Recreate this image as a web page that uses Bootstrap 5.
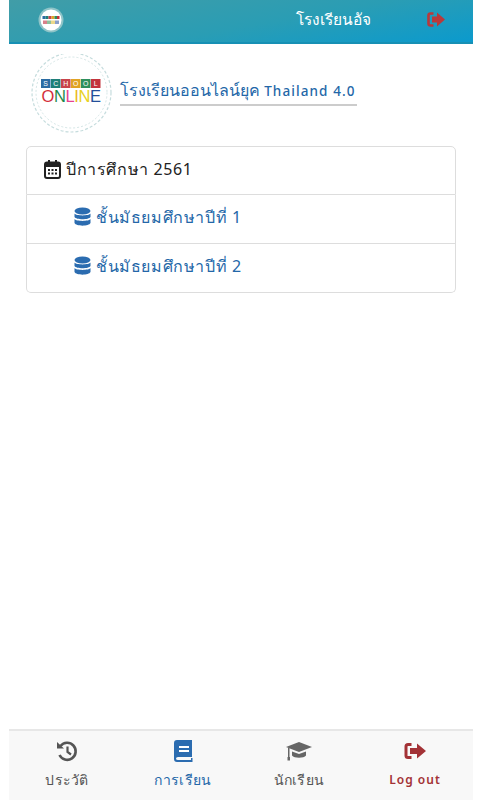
<!DOCTYPE html>
<html lang="th">
<head>
    <meta charset="UTF-8">
    <meta name="viewport" content="width=device-width, initial-scale=1.0">
    <title>School Online</title>
    <link rel="stylesheet" href="https://cdn.jsdelivr.net/npm/bootstrap@5.3.0/dist/css/bootstrap.min.css">
    <style>
        body {
            background: #fff;
            font-family: "Noto Sans", "Open Sans", "Liberation Sans", sans-serif;
        }
        .app-shell {
            width: 464px;
            height: 800px;
            margin-left: 9px;
        }
        .top-bar {
            height: 44px;
            background: linear-gradient(170deg, #419da7 0%, #2a9db4 55%, #0b9acd 100%);
            border-bottom: 2px solid #1790b4;
        }
        .top-logo {
            width: 26px;
            height: 26px;
            margin: 0 0 2px 29px;
        }
        .top-title {
            color: #fff;
            font-size: 15.5px;
            margin: 0 0 2px 232px;
            width: 100px;
            line-height: 1;
        }
        .top-exit {
            width: 18px;
            height: 15px;
            margin: 0 0 4px 31px;
        }
        .brand-row {
            padding: 10px 0 0 20px;
        }
        .brand-logo {
            width: 85px;
            height: 80px;
            flex: none;
        }
        .brand-title {
            margin: 0 0 4px 6px;
            width: 237px;
            height: 28px;
            color: #2467a8;
            font-size: 16px;
            line-height: 24px;
            white-space: nowrap;
            border-bottom: 2px solid #ccc;
        }
        .brand-latin {
            font-size: 13.5px;
            font-weight: 500;
            letter-spacing: 1.1px;
        }
        .year-list {
            margin: 12px 17px 0;
            border-color: #ddd;
            border-radius: 5px;
        }
        .year-list .list-group-item {
            height: 49px;
            padding: 0 0 3px;
            display: flex;
            align-items: center;
            border-color: #ddd;
            font-size: 16px;
            letter-spacing: .6px;
        }
        .year-list .year-head {
            padding-left: 17px;
            color: #222;
        }
        .year-list .grade-row {
            padding: 0 0 5px 47px;
            color: #2467a8;
        }
        .row-icon {
            width: 17px;
            height: 20px;
            margin-right: 5px;
            flex: none;
        }
        .bottom-nav {
            height: 71px;
            background: #f8f8f8;
            border-top: 2px solid #e7e7e7;
        }
        .nav-cell {
            width: 25%;
            padding-top: 9px;
            font-size: 14px;
            line-height: 20px;
            color: #555;
            letter-spacing: .3px;
        }
        .nav-cell svg {
            display: block;
            height: 22px;
            margin: 0 auto 8px;
        }
        .nav-cell.is-active {
            color: #2467a8;
        }
        .nav-cell.is-out {
            color: #a33236;
            font-size: 12px;
            font-weight: 600;
            letter-spacing: 1px;
        }
    </style>
</head>
<body>
    <div class="app-shell d-flex flex-column">
        <div class="top-bar d-flex align-items-center">
            <svg class="top-logo" viewBox="0 0 26 26">
                <circle cx="13" cy="13" r="12.500" fill="#8fc4c8"/>
                <circle cx="13" cy="13" r="10.500" fill="#fff"/>
                <rect x="4.500" y="9" width="3" height="3" fill="#2b6ca3"/>
                <rect x="7.500" y="9" width="3" height="3" fill="#1f7f78"/>
                <rect x="10.500" y="9" width="3" height="3" fill="#c8434a"/>
                <rect x="13.500" y="9" width="3" height="3" fill="#e0a325"/>
                <rect x="16.500" y="9" width="2.500" height="3" fill="#2f8f5e"/>
                <rect x="19" y="9" width="2.500" height="3" fill="#c3343c"/>
                <rect x="5" y="13.500" width="4" height="3.500" fill="#d9808a"/>
                <rect x="9" y="13.500" width="4" height="3.500" fill="#8fc09c"/>
                <rect x="13" y="13.500" width="4" height="3.500" fill="#ecd98a"/>
                <rect x="17" y="13.500" width="4" height="3.500" fill="#8a9fc9"/>
            </svg>
            <div class="top-title">โรงเรียนอัจ</div>
            <svg class="top-exit" viewBox="0 0 18 15">
                <path d="M6.500 1.500H3.500Q1.500 1.500 1.500 3.500V11.500Q1.500 13.500 3.500 13.500H6.500" fill="none" stroke="#b9393b" stroke-width="2.600"/>
                <path d="M5 4.500H10V.5L18 7.500 10 14.500V10.500H5Z" fill="#b9393b"/>
            </svg>
        </div>

        <div class="brand-row d-flex align-items-center">
            <svg class="brand-logo" viewBox="0 0 85 80">
                <circle cx="42.500" cy="38.500" r="39.500" fill="none" stroke="#c5dcdd" stroke-width="1.200" stroke-dasharray="3 2"/>
                <circle cx="42.500" cy="38.500" r="35.500" fill="none" stroke="#d5e6e6" stroke-width="1" stroke-dasharray="2 2"/>
                <g>
                    <rect x="12" y="25" width="9.500" height="9" fill="#2b6ca3"/>
                    <rect x="22" y="25" width="9.500" height="9" fill="#1f7f78"/>
                    <rect x="32" y="25" width="9.500" height="9" fill="#c8434a"/>
                    <rect x="42" y="25" width="9.500" height="9" fill="#e0a325"/>
                    <rect x="52" y="25" width="9.500" height="9" fill="#2f8f5e"/>
                    <rect x="62" y="25" width="9.500" height="9" fill="#c3343c"/>
                </g>
                <g font-family="Liberation Sans, sans-serif" font-size="7" fill="#fff" text-anchor="middle">
                    <text x="16.700" y="32">S</text>
                    <text x="26.700" y="32">C</text>
                    <text x="36.700" y="32">H</text>
                    <text x="46.700" y="32">O</text>
                    <text x="56.700" y="32">O</text>
                    <text x="66.700" y="32">L</text>
                </g>
                <text x="42" y="48" font-family="Liberation Sans, sans-serif" font-size="16.500" text-anchor="middle" letter-spacing="-.4"><tspan fill="#d42f3b">O</tspan><tspan fill="#1e8a4c">N</tspan><tspan fill="#e8418f">L</tspan><tspan fill="#e8b823">I</tspan><tspan fill="#e8d223">N</tspan><tspan fill="#234f9a">E</tspan></text>
            </svg>
            <div class="brand-title">โรงเรียนออนไลน์ยุค <span class="brand-latin">Thailand 4.0</span></div>
        </div>

        <div class="list-group year-list">
            <div class="list-group-item year-head">
                <svg class="row-icon" viewBox="0 0 17 20">
                    <path d="M1 5.500Q1 3.500 3 3.500H14Q16 3.500 16 5.500V17Q16 19 14 19H3Q1 19 1 17Z" fill="none" stroke="#222" stroke-width="2"/>
                    <path d="M1 4H16V8H1Z" fill="#222"/>
                    <path d="M4 1H6V5H4ZM11 1H13V5H11Z" fill="#222"/>
                    <path d="M4 10h2v2H4ZM7.500 10h2v2h-2ZM11 10h2v2h-2ZM4 13.500h2v2H4ZM7.500 13.500h2v2h-2ZM11 13.500h2v2h-2Z" fill="#222"/>
                </svg>
                ปีการศึกษา 2561
            </div>
            <a class="list-group-item grade-row text-decoration-none" href="#">
                <svg class="row-icon" viewBox="0 0 17 20">
                    <ellipse cx="8.500" cy="4" rx="8" ry="3.500" fill="#2b6cb0"/>
                    <path d="M.5 6.500C2 9 15 9 16.500 6.500V10C15 13 2 13 .5 10Z" fill="#2b6cb0"/>
                    <path d="M.5 12C2 14.500 15 14.500 16.500 12V16C15 19.500 2 19.500 .5 16Z" fill="#2b6cb0"/>
                </svg>
                ชั้นมัธยมศึกษาปีที่ 1
            </a>
            <a class="list-group-item grade-row text-decoration-none" href="#">
                <svg class="row-icon" viewBox="0 0 17 20">
                    <ellipse cx="8.500" cy="4" rx="8" ry="3.500" fill="#2b6cb0"/>
                    <path d="M.5 6.500C2 9 15 9 16.500 6.500V10C15 13 2 13 .5 10Z" fill="#2b6cb0"/>
                    <path d="M.5 12C2 14.500 15 14.500 16.500 12V16C15 19.500 2 19.500 .5 16Z" fill="#2b6cb0"/>
                </svg>
                ชั้นมัธยมศึกษาปีที่ 2
            </a>
        </div>

        <div class="bottom-nav d-flex mt-auto text-center">
            <div class="nav-cell">
                <svg viewBox="0 0 22 22" width="22">
                    <path d="M4.500 6A8.500 8.500 0 1 1 3.500 15" fill="none" stroke="#555" stroke-width="2.600"/>
                    <path d="M1 2L8 8.500H1Z" fill="#555"/>
                    <path d="M11.500 6.500V12L15 14.500" fill="none" stroke="#555" stroke-width="2.200"/>
                </svg>
                ประวัติ
            </div>
            <div class="nav-cell is-active">
                <svg viewBox="0 0 19 22" width="19">
                    <path d="M3 0H18V17H4Q2 17 2 18.500T4 20H17V18H18.500V22H3Q0 22 0 19V3Q0 0 3 0Z" fill="#2b6cb0"/>
                    <path d="M5 6H15V8H5ZM5 10H15V12H5Z" fill="#fff"/>
                </svg>
                การเรียน
            </div>
            <div class="nav-cell">
                <svg viewBox="0 0 26 22" width="26">
                    <path d="M13 2L26 7 13 12 0 7Z" fill="#666"/>
                    <path d="M6 11.500L13 14 20 11.500V15.500C18 18.500 8 18.500 6 15.500Z" fill="#666"/>
                    <path d="M2 8V17H3.500V8Z" fill="#666"/>
                    <rect x="1.500" y="17" width="2.500" height="3.500" fill="#666"/>
                </svg>
                นักเรียน
            </div>
            <div class="nav-cell is-out">
                <svg viewBox="0 0 22 22" width="22">
                    <path d="M7.500 4.500H4Q2 4.500 2 6.500V15.500Q2 17.500 4 17.500H7.500" fill="none" stroke="#a33236" stroke-width="3"/>
                    <path d="M6 8H13V3.500L22 11 13 18.500V14H6Z" fill="#a33236"/>
                </svg>
                Log out
            </div>
        </div>
    </div>
    <script src="https://cdn.jsdelivr.net/npm/bootstrap@5.3.0/dist/js/bootstrap.bundle.min.js"></script>
</body>
</html>
